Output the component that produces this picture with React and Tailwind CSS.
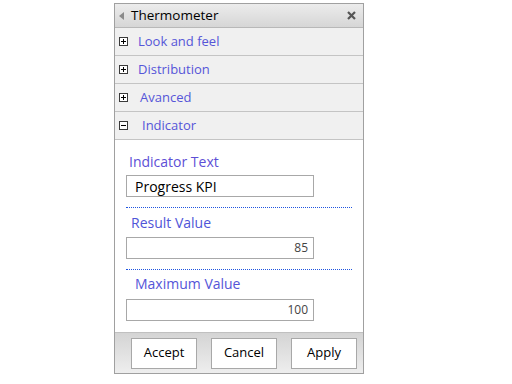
import React from "react";

const font = { fontFamily: '"Open Sans", "Noto Sans", sans-serif' };

function Box({ minus }) {
  return (
    <span className="relative inline-block w-[9px] h-[9px] border border-[#3a3a3a] bg-white shrink-0">
      <span className="absolute left-[1px] right-[1px] top-[3px] h-[1px] bg-black" />
      {!minus && <span className="absolute top-[1px] bottom-[1px] left-[3px] w-[1px] bg-black" />}
    </span>
  );
}

function Row({ label, minus, pad }) {
  return (
    <div className="h-[28px] flex items-center border-b border-[#c4c4c4] bg-[#f0f0f0] pl-[4px]">
      <Box minus={minus} />
      <span className={`text-[13px] text-[#5555d8] ${pad}`}>{label}</span>
    </div>
  );
}

function Input({ value, right }) {
  return (
    <div
      className={`ml-[11px] w-[188px] h-[22px] border border-[#a8a8a8] bg-white flex items-center ${
        right ? "justify-end pr-[5px] text-[12px] text-[#444]" : "pl-[8px] text-[14px] text-black"
      }`}
    >
      {value}
    </div>
  );
}

function Btn({ children }) {
  return (
    <div className="w-[66px] h-[31px] bg-white border border-[#a8a8a8] flex items-center justify-center text-[13px] text-black">
      {children}
    </div>
  );
}

export default function App() {
  return (
    <div className="w-[512px] h-[384px] bg-white pt-[3px] pl-[114px]" style={font}>
      <div className="w-[250px] border border-[#a0a0a0] bg-white">
        <div className="h-[24px] border-b border-[#b8b8b8] bg-gradient-to-b from-[#ececec] to-[#d6d6d6] flex items-center pl-[4px] pr-[7px]">
          <svg width="5" height="8" viewBox="0 0 5 8" className="mr-[7px]">
            <path d="M5 0 L0 4 L5 8 Z" fill="#8a8a8a" />
          </svg>
          <span className="text-[13.5px] text-black flex-1">Thermometer</span>
          <svg width="9" height="9" viewBox="0 0 9 9">
            <path d="M1 1 L8 8 M8 1 L1 8" stroke="#555" strokeWidth="2.2" />
          </svg>
        </div>
        <Row label="Look and feel" pad="ml-[10px]" />
        <Row label="Distribution" pad="ml-[10px]" />
        <Row label="Avanced" pad="ml-[12px]" />
        <Row label="Indicator" minus pad="ml-[14px]" />
        <div className="pt-[12px] pb-[11px]">
          <div className="ml-[14px] h-[20px] text-[14px] leading-[20px] text-[#5d4fd6]">Indicator Text</div>
          <div className="mt-[3px]">
            <Input value="Progress KPI" />
          </div>
          <div className="ml-[11px] w-[226px] mt-[10px] border-t border-dotted border-[#1f55e0]" />
          <div className="ml-[16px] mt-[5px] h-[20px] text-[14px] leading-[20px] text-[#4f55d8]">Result Value</div>
          <div className="mt-[4px]">
            <Input value="85" right />
          </div>
          <div className="ml-[11px] w-[226px] mt-[10px] border-t border-dotted border-[#1f55e0]" />
          <div className="ml-[20px] mt-[4px] h-[20px] text-[14px] leading-[20px] text-[#5555d8]">Maximum Value</div>
          <div className="mt-[5px]">
            <Input value="100" right />
          </div>
        </div>
        <div className="h-[41px] border-t border-[#c0c0c0] bg-gradient-to-b from-[#d4d4d4] to-[#eeeeee] flex items-center pl-[16px] gap-[14px]">
          <Btn>Accept</Btn>
          <Btn>Cancel</Btn>
          <Btn>Apply</Btn>
        </div>
      </div>
    </div>
  );
}
